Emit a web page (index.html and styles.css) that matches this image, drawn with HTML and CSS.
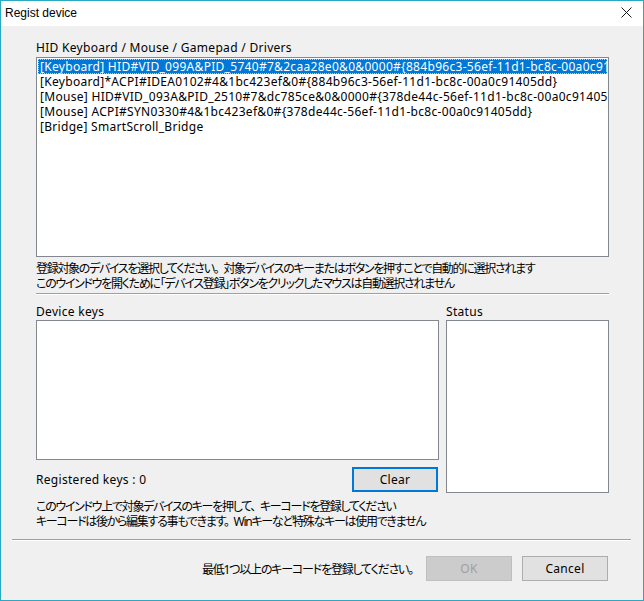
FILE: index.html
```html
<!DOCTYPE html>
<html lang="ja">
<head>
    <meta charset="UTF-8">
    <meta name="viewport" content="width=device-width, initial-scale=1.0">
    <title>Regist device</title>
    <link rel="stylesheet" href="styles.css">
</head>
<body>
    <div class="window">
        <!-- Title bar -->
        <div class="titlebar">
            <span class="title">Regist device</span>
            <svg class="close-icon" width="11" height="11" viewBox="0 0 11 11">
                <path d="M0.5 0.5 L10.5 10.5 M10.5 0.5 L0.5 10.5" stroke="#1a1a1a" stroke-width="1" fill="none"/>
            </svg>
        </div>

        <div class="dialog-body">
            <div class="main">
                <div class="field-label">HID Keyboard / Mouse / Gamepad / Drivers</div>
                <div class="device-list">
                    <div class="list-item selected">[Keyboard] HID#VID_099A&amp;PID_5740#7&amp;2caa28e0&amp;0&amp;0000#{884b96c3-56ef-11d1-bc8c-00a0c91405dd}</div>
                    <div class="list-item">[Keyboard]*ACPI#IDEA0102#4&amp;1bc423ef&amp;0#{884b96c3-56ef-11d1-bc8c-00a0c91405dd}</div>
                    <div class="list-item">[Mouse] HID#VID_093A&amp;PID_2510#7&amp;dc785ce&amp;0&amp;0000#{378de44c-56ef-11d1-bc8c-00a0c91405dd}</div>
                    <div class="list-item">[Mouse] ACPI#SYN0330#4&amp;1bc423ef&amp;0#{378de44c-56ef-11d1-bc8c-00a0c91405dd}</div>
                    <div class="list-item">[Bridge] SmartScroll_Bridge</div>
                </div>
                <div class="hint hint-top">
                    登録対象のデバイスを選択してください<span class="gap">。</span>対象デバイスのキーまたはボタンを押すことで自動的に選択されます<br>
                    このウインドウを開くために「デバイス登録」ボタンをクリックしたマウスは自動選択されません
                </div>
                <div class="separator"></div>

                <div class="columns">
                    <div class="keys-column">
                        <div class="field-label label-small">Device keys</div>
                        <div class="keys-box"></div>
                        <div class="keys-row">
                            <span>Registered keys : 0</span>
                            <button type="button" class="btn btn-focus">Clear</button>
                        </div>
                    </div>
                    <div class="status-column">
                        <div class="field-label label-small">Status</div>
                        <div class="status-box"></div>
                    </div>
                </div>

                <div class="hint hint-bottom">
                    このウインドウ上で対象デバイスのキーを押して<span class="gap">、</span>キーコードを登録してください<br>
                    キーコードは後から編集する事もできます<span class="gap">。</span>Winキーなど特殊なキーは使用できません
                </div>
            </div>

            <div class="separator footer-separator"></div>

            <div class="footer">
                <span class="footer-message">最低1つ以上のキーコードを登録してください。</span>
                <button type="button" class="btn btn-disabled" disabled>OK</button>
                <button type="button" class="btn">Cancel</button>
            </div>
        </div>
    </div>
</body>
</html>
```

FILE: styles.css
```css
body, html {
    margin: 0;
    padding: 0;
    height: 100%;
}
body {
    font-family: "Noto Sans", "Noto Sans CJK JP", sans-serif;
    font-size: 12px;
    letter-spacing: 0.3px;
    color: #000;
    font-feature-settings: "palt";
}
.window {
    width: 644px;
    height: 601px;
    box-sizing: border-box;
    border: 1px solid #2aa9c3;
    display: flex;
    flex-direction: column;
    background-color: #f0f0f0;
}

/* Title bar */
.titlebar {
    height: 25px;
    background-color: #ffffff;
    display: flex;
    align-items: center;
    justify-content: space-between;
    padding: 0 11px 0 4px;
    flex-shrink: 0;
}
.title {
    font-family: "Liberation Sans", sans-serif;
    font-size: 12px;
    letter-spacing: 0;
    color: #000;
    margin-top: -1px;
}
.close-icon {
    display: block;
    margin-top: -2px;
}

.dialog-body {
    flex: 1;
    display: flex;
    flex-direction: column;
}
.main {
    padding: 14px 34px 0 35px;
}
.field-label {
    line-height: 15px;
    margin-bottom: 2px;
}
.label-small {
    margin-bottom: 1px;
}

/* Device list */
.device-list {
    height: 200px;
    box-sizing: border-box;
    border: 1px solid #828790;
    background-color: #ffffff;
    padding: 1px;
    overflow: hidden;
    white-space: nowrap;
}
.list-item {
    height: 15px;
    line-height: 15px;
    padding-left: 2px;
    overflow: hidden;
}
.list-item.selected {
    background-color: #0078d7;
    color: #ffffff;
    outline: 1px dotted #f4c27a;
    outline-offset: -1px;
}

/* Hint texts */
.hint {
    line-height: 15px;
    letter-spacing: -1.3px;
}
.gap {
    margin-right: 5px;
}
.hint-top {
    margin-top: 4px;
}
.hint-bottom {
    margin-top: 6px;
}

.separator {
    border-top: 1px solid #a0a0a0;
    border-bottom: 1px solid #ffffff;
    height: 0;
    margin-top: 2px;
}

/* Keys and status */
.columns {
    display: flex;
    gap: 7px;
    margin-top: 9px;
}
.keys-column {
    width: 403px;
}
.status-column {
    flex: 1;
}
.keys-box {
    height: 140px;
    box-sizing: border-box;
    border: 1px solid #828790;
    background-color: #ffffff;
}
.status-box {
    height: 173px;
    box-sizing: border-box;
    border: 1px solid #828790;
    background-color: #ffffff;
}
.keys-row {
    display: flex;
    justify-content: space-between;
    align-items: center;
    margin-top: 7px;
    padding-right: 1px;
}

/* Buttons */
.btn {
    width: 86px;
    height: 25px;
    box-sizing: border-box;
    background-color: #e1e1e1;
    border: 1px solid #adadad;
    font-family: "Noto Sans", sans-serif;
    font-size: 12px;
    letter-spacing: 0.3px;
    color: #000;
    padding: 0;
}
.btn-focus {
    border: 2px solid #0078d7;
}
.btn-disabled {
    background-color: #cccccc;
    border-color: #bfbfbf;
    color: #a0a0a0;
}

/* Footer */
.footer-separator {
    margin: 10px 12px 0 11px;
}
.footer {
    display: flex;
    justify-content: flex-end;
    align-items: center;
    gap: 10px;
    padding: 0 35px;
    margin-top: 15px;
}
.footer-message {
    margin-right: 3px;
    letter-spacing: -1.2px;
}
```
